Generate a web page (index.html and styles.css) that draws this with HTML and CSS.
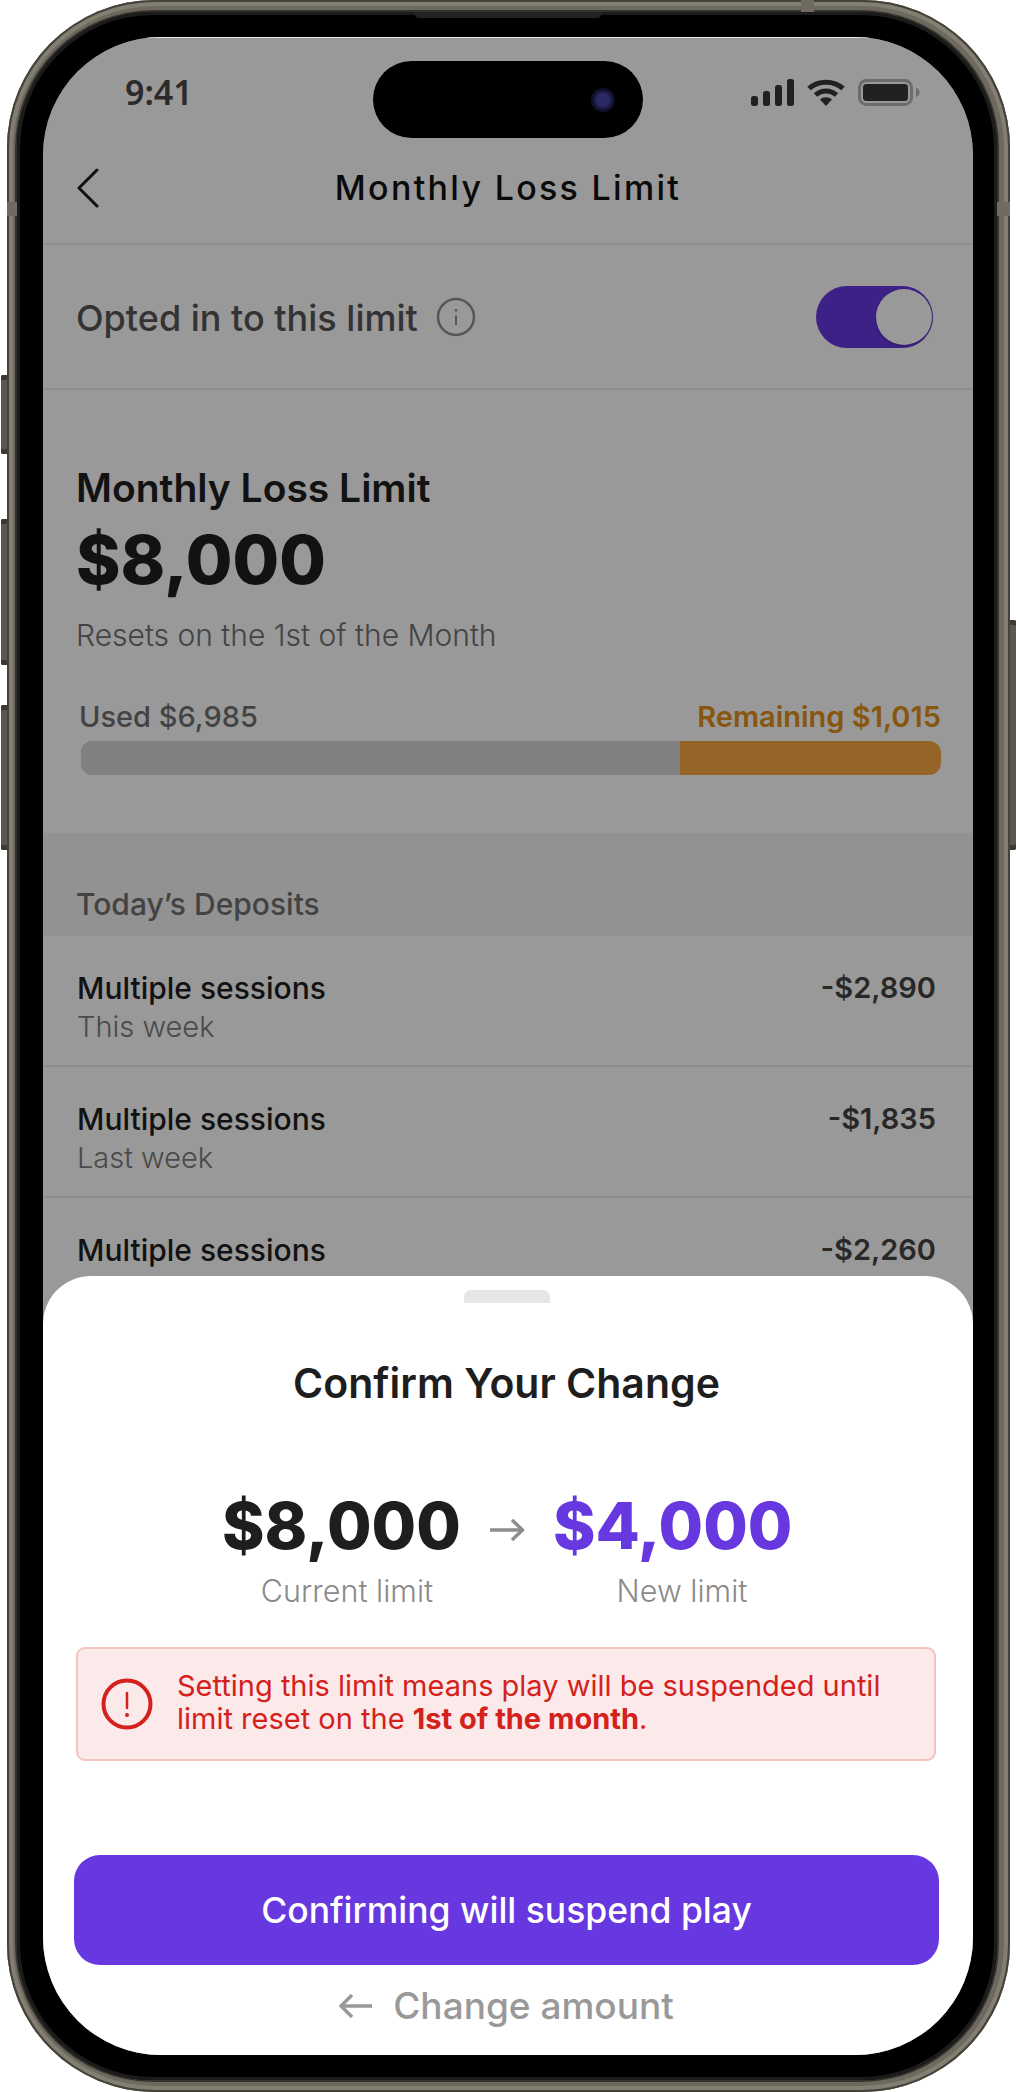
FILE: index.html
```html
<!DOCTYPE html>
<html lang="en">
<head>
    <meta charset="UTF-8">
    <meta name="viewport" content="width=device-width, initial-scale=1.0">
    <title>Monthly Loss Limit</title>
    <link rel="stylesheet" href="styles.css">
</head>
<body>
    <!-- Side buttons -->
    <span class="side-btn side-btn-silent"></span>
    <span class="side-btn side-btn-up"></span>
    <span class="side-btn side-btn-down"></span>
    <span class="side-btn side-btn-power"></span>

    <div class="phone">
        <span class="band band-top"></span>
        <span class="band band-left"></span>
        <span class="band band-right"></span>
        <span class="speaker"></span>
        <div class="bezel">
            <div class="screen">
                <header class="status">
                    <span class="time">9:41</span>
                    <div class="status-icons">
                        <svg width="43" height="27" viewBox="0 0 43 27" fill="#383838">
                            <rect x="0" y="17" width="7" height="10" rx="2.5"/>
                            <rect x="12" y="12" width="7" height="15" rx="2.5"/>
                            <rect x="24" y="6" width="7" height="21" rx="2.5"/>
                            <rect x="36" y="0" width="7" height="27" rx="2.5"/>
                        </svg>
                        <svg width="38" height="27" viewBox="0 0 38 27">
                            <path d="M2 9.500C11 1 27 1 36 9.500" fill="none" stroke="#383838" stroke-width="5"/>
                            <path d="M8.500 16C14.500 10.500 23.500 10.500 29.500 16" fill="none" stroke="#383838" stroke-width="5"/>
                            <path d="M13 20.500C16.500 17.500 21.500 17.500 25 20.500L19 27Z" fill="#383838"/>
                        </svg>
                        <svg width="62" height="27" viewBox="0 0 62 27">
                            <rect x="1.500" y="1.500" width="52" height="24" rx="7" fill="none" stroke="#b4b4b4" stroke-width="3"/>
                            <rect x="5" y="5" width="45" height="17" rx="3.500" fill="#383838"/>
                            <path d="M58 9c2.500 1 3.500 2.500 3.500 4.500s-1 3.500-3.500 4.500z" fill="#b4b4b4"/>
                        </svg>
                    </div>
                </header>

                <nav class="nav">
                    <svg class="back" width="22" height="40" viewBox="0 0 22 40" fill="none" stroke="#1c1c1c" stroke-width="3" stroke-linecap="round" stroke-linejoin="round">
                        <path d="M20 2L2 20L20 38"/>
                    </svg>
                    <h1 class="nav-title">Monthly Loss Limit</h1>
                </nav>

                <section class="opt-row">
                    <span class="opt-label">Opted in to this limit</span>
                    <svg class="info" width="40" height="40" viewBox="0 0 40 40" fill="none" stroke="#8f8f8f">
                        <circle cx="20" cy="20" r="18" stroke-width="2.500"/>
                        <path d="M20 18.500V28" stroke-width="2"/>
                        <path d="M20 12v2.500" stroke-width="2.500"/>
                    </svg>
                    <span class="toggle"><span class="knob"></span></span>
                </section>

                <section class="limit">
                    <h2 class="limit-title">Monthly Loss Limit</h2>
                    <p class="limit-amount">$8,000</p>
                    <p class="limit-reset">Resets on the 1st of the Month</p>
                    <div class="bar-labels">
                        <span class="used">Used $6,985</span>
                        <span class="remaining">Remaining $1,015</span>
                    </div>
                    <div class="bar"><span class="bar-used" style="width: 69.6%"></span></div>
                </section>

                <div class="list-head">Today’s Deposits</div>

                <div class="deposit">
                    <div>
                        <p class="deposit-name">Multiple sessions</p>
                        <p class="deposit-when">This week</p>
                    </div>
                    <span class="deposit-amount">-$2,890</span>
                </div>
                <div class="deposit">
                    <div>
                        <p class="deposit-name">Multiple sessions</p>
                        <p class="deposit-when">Last week</p>
                    </div>
                    <span class="deposit-amount">-$1,835</span>
                </div>
                <div class="deposit">
                    <div>
                        <p class="deposit-name">Multiple sessions</p>
                    </div>
                    <span class="deposit-amount">-$2,260</span>
                </div>

                <!-- Dim layer and bottom sheet -->
                <div class="overlay"></div>
                <div class="island"><span class="camera"></span></div>

                <div class="sheet">
                    <span class="handle"></span>
                    <h2 class="sheet-title">Confirm Your Change</h2>

                    <div class="change">
                        <span class="change-value">$8,000</span>
                        <svg class="change-arrow" width="36" height="24" viewBox="0 0 36 24" fill="none" stroke="#8d8d8d" stroke-width="3.500" stroke-linejoin="round">
                            <path d="M1 12H33"/>
                            <path d="M23 2L33.500 12L23 22"/>
                        </svg>
                        <span class="change-value change-new">$4,000</span>
                        <span class="change-label">Current limit</span>
                        <span></span>
                        <span class="change-label">New limit</span>
                    </div>

                    <div class="alert">
                        <svg class="alert-icon" width="52" height="52" viewBox="0 0 52 52" fill="none" stroke="#d4211c">
                            <circle cx="26" cy="26" r="23.500" stroke-width="4"/>
                            <path d="M26 15V30" stroke-width="2.500" stroke-linecap="round"/>
                            <circle cx="26" cy="37" r="2" fill="#d4211c" stroke="none"/>
                        </svg>
                        <p class="alert-text">Setting this limit means play will be suspended until limit reset on the <strong>1st of the month</strong>.</p>
                    </div>

                    <button class="confirm" type="button">Confirming will suspend play</button>

                    <a class="change-link" href="#">
                        <svg width="34" height="26" viewBox="0 0 34 26" fill="none" stroke="#999" stroke-width="3.500" stroke-linejoin="round">
                            <path d="M33 13H2"/>
                            <path d="M13 2L2 13L13 24"/>
                        </svg>
                        Change amount
                    </a>
                </div>
            </div>
        </div>
    </div>
</body>
</html>
```

FILE: styles.css
```css
* {
    box-sizing: border-box;
}
body {
    position: relative;
    width: 1016px;
    height: 2092px;
    margin: 0;
    overflow: hidden;
    background: #fff;
    font-family: Inter, "Liberation Sans", sans-serif;
}
h1, h2, p {
    margin: 0;
    font-weight: inherit;
}

/* Phone frame */
.phone {
    position: relative;
    width: 1003px;
    height: 2092px;
    margin-left: 7px;
    padding: 12px 13px 12px 10px;
    border-radius: 148px;
    background: #6e695f;
    box-shadow: inset 0 0 0 2px #45423a, inset 0 0 0 6px #837e72;
}
.bezel {
    height: 100%;
    padding: 25px 24px 25px 26px;
    border-radius: 136px;
    background: #000;
    box-shadow: 0 0 0 2px #35332d, inset 0 0 0 3px #1c1c1c;
}
.side-btn {
    position: absolute;
    width: 8px;
    border-radius: 2px;
    background: #5c584f;
    box-shadow: inset 0 5px 0 #3c3a33, inset 0 -5px 0 #3c3a33;
}
.side-btn-silent {
    left: 1px;
    top: 375px;
    height: 79px;
}
.side-btn-up {
    left: 1px;
    top: 519px;
    height: 146px;
}
.side-btn-down {
    left: 1px;
    top: 705px;
    height: 145px;
}
.side-btn-power {
    left: 1008px;
    top: 620px;
    height: 230px;
}
.band {
    position: absolute;
    background: #6f6b60;
}
.band-top {
    left: 794px;
    top: 0;
    width: 13px;
    height: 12px;
}
.band-left {
    left: 0;
    top: 202px;
    width: 10px;
    height: 14px;
}
.band-right {
    right: 0;
    top: 202px;
    width: 13px;
    height: 14px;
}
.speaker {
    position: absolute;
    left: 408px;
    top: 12px;
    width: 186px;
    height: 6px;
    border-radius: 0 0 4px 4px;
    background: #232323;
}
.screen {
    position: relative;
    width: 930px;
    height: 2018px;
    overflow: hidden;
    border-radius: 118px;
    background: #fff;
}

/* Status bar */
.status {
    display: flex;
    align-items: center;
    justify-content: space-between;
    height: 110px;
    padding: 0 53px 0 82px;
}
.time {
    color: #484848;
    font-family: "Noto Sans", sans-serif;
    font-size: 34px;
    font-weight: 600;
}
.status-icons {
    display: flex;
    align-items: center;
    gap: 13px;
}
.island {
    position: absolute;
    left: 330px;
    top: 24px;
    width: 270px;
    height: 77px;
    border-radius: 39px;
    background: #000;
}
.camera {
    position: absolute;
    right: 28px;
    top: 27px;
    width: 24px;
    height: 24px;
    border-radius: 50%;
    background: radial-gradient(circle, #2b2a66 0 35%, #12102c 60%, #09070f 100%);
}

/* Nav */
.nav {
    position: relative;
    display: flex;
    align-items: center;
    justify-content: center;
    height: 98px;
    padding-bottom: 16px;
    border-bottom: 2px solid #eee;
}
.back {
    position: absolute;
    left: 34px;
    top: 21px;
}
.nav-title {
    color: #111;
    font-size: 34px;
    font-weight: 500;
    letter-spacing: 2.3px;
}

/* Opt in row */
.opt-row {
    display: flex;
    align-items: center;
    height: 145px;
    padding: 0 40px 0 33px;
    border-bottom: 2px solid #eee;
}
.opt-label {
    padding-top: 3px;
    color: #565656;
    font-size: 36px;
    font-weight: 500;
}
.info {
    margin-left: 18px;
}
.toggle {
    position: relative;
    width: 117px;
    height: 62px;
    margin-left: auto;
    border-radius: 31px;
    background: #6737e0;
}
.knob {
    position: absolute;
    right: 1px;
    top: 3px;
    width: 56px;
    height: 56px;
    border-radius: 50%;
    background: #fff;
    box-shadow: 0 1px 3px #0000003d;
}

/* Limit */
.limit {
    height: 443px;
    padding: 73px 32px 0 33px;
}
.limit-title {
    color: #1e1e1e;
    font-size: 39px;
    font-weight: 600;
    line-height: 50px;
}
.limit-amount {
    margin-top: 7px;
    color: #1e1e1e;
    font-size: 67.500px;
    font-weight: 800;
    line-height: 80px;
}
.limit-reset {
    margin-top: 13px;
    color: #707070;
    font-size: 30px;
    font-weight: 300;
    line-height: 44px;
}
.bar-labels {
    display: flex;
    justify-content: space-between;
    margin-top: 42px;
    padding-left: 3px;
    font-size: 29px;
    font-weight: 500;
    line-height: 36px;
}
.used {
    color: #707070;
}
.remaining {
    color: #e38f14;
    font-weight: 600;
}
.bar {
    display: flex;
    justify-content: flex-start;
    height: 34px;
    margin: 6px 0 0 5px;
    overflow: hidden;
    border-radius: 12px;
    background: #f7a841;
}
.bar-used {
    background: #d5d5d5;
}

/* Deposits */
.list-head {
    display: flex;
    align-items: flex-end;
    height: 103px;
    padding: 0 33px 14px;
    background: #f3f3f3;
    color: #707070;
    font-size: 30px;
    font-weight: 500;
    line-height: 36px;
}
.deposit {
    display: flex;
    justify-content: space-between;
    height: 131px;
    padding: 34px 37px 0 34px;
    border-bottom: 2px solid #e9e9e9;
}
.deposit-name {
    color: #1e1e1e;
    font-size: 30px;
    font-weight: 500;
    line-height: 36px;
}
.deposit-when {
    margin-top: 3px;
    color: #7c7c7c;
    font-size: 29px;
    font-weight: 300;
    line-height: 36px;
}
.deposit-amount {
    color: #444;
    font-size: 29px;
    font-weight: 600;
    line-height: 36px;
}

/* Dim layer */
.overlay {
    position: absolute;
    inset: 0;
    border-top: 1px solid #e6e6e6;
    background: rgba(0, 0, 0, 0.4);
}

/* Bottom sheet */
.sheet {
    position: absolute;
    left: 0;
    right: 0;
    bottom: 0;
    height: 779px;
    padding: 14px 34px 0 31px;
    border-radius: 48px 48px 0 0;
    background: #fff;
}
.handle {
    display: block;
    width: 86px;
    height: 13px;
    margin: 0 auto;
    border-radius: 7px 7px 0 0;
    background: #e6e6e6;
}
.sheet-title {
    margin-top: 55px;
    color: #1e1e1e;
    font-size: 41px;
    font-weight: 600;
    line-height: 50px;
    text-align: center;
}
.change {
    display: grid;
    grid-template-columns: 250px 81px 258px;
    align-items: center;
    margin-top: 78px;
    padding-left: 148px;
}
.change-value {
    color: #1e1e1e;
    font-size: 64.500px;
    font-weight: 800;
    line-height: 80px;
}
.change-new {
    color: #6737e0;
}
.change-arrow {
    margin: 8px 0 0 17px;
}
.change-label {
    margin-top: 7px;
    color: #8a8a8a;
    font-size: 30.500px;
    font-weight: 300;
    line-height: 36px;
    text-align: center;
}
.alert {
    display: flex;
    align-items: center;
    gap: 24px;
    height: 114px;
    margin: 38px 3px 0 2px;
    padding: 0 10px 0 23px;
    border: 2px solid #f5c2c0;
    border-radius: 9px;
    background: #fce9e9;
}
.alert-icon {
    flex: none;
}
.alert-text {
    margin-top: -4px;
    color: #d4211c;
    font-size: 29px;
    line-height: 33px;
}
.alert-text strong {
    font-weight: 700;
}
.confirm {
    display: block;
    width: 865px;
    height: 110px;
    margin-top: 94px;
    border: none;
    border-radius: 26px;
    background: #6737e0;
    color: #fff;
    font-family: inherit;
    font-size: 35.500px;
    font-weight: 500;
}
.change-link {
    display: flex;
    align-items: center;
    justify-content: center;
    gap: 20px;
    margin-top: 23px;
    color: #999;
    font-size: 37px;
    font-weight: 500;
    line-height: 36px;
    text-decoration: none;
}
```
